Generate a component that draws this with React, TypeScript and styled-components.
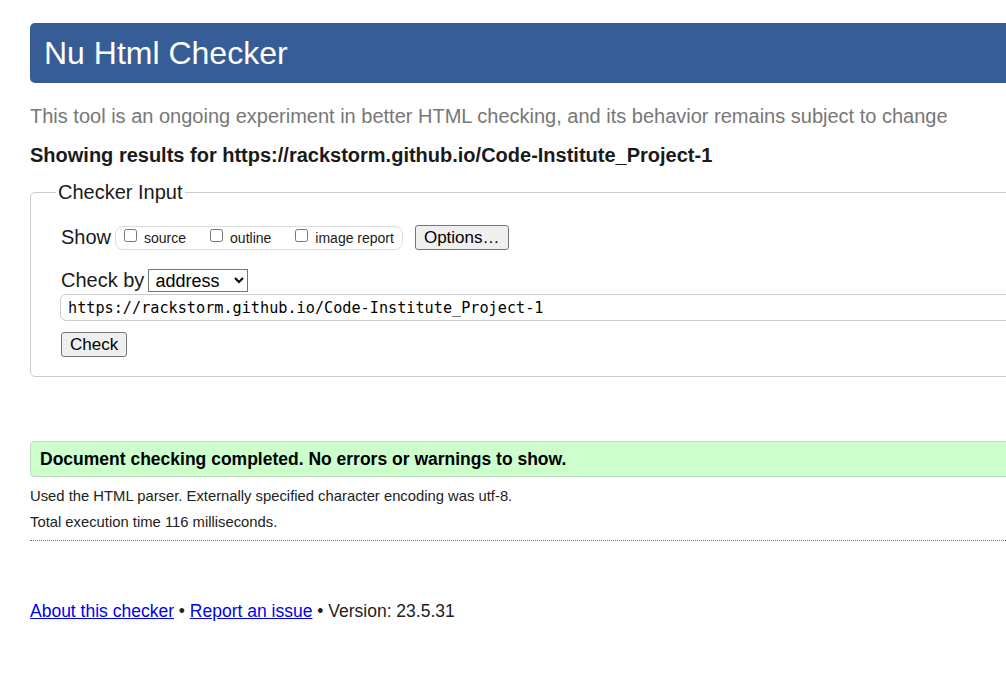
import React from "react";
import styled, { createGlobalStyle } from "styled-components";

const GlobalStyle = createGlobalStyle`
    html, body {
        margin: 0;
        padding: 0;
        background: #fff;
        overflow: hidden;
    }
    body {
        font-family: "Liberation Sans", Arial, sans-serif;
        color: #1a1a1a;
    }
`;

const Page = styled.div`
    width: 1100px;
    padding: 23px 0 0 30px;
`;

const Title = styled.h1`
    margin: 0;
    height: 60px;
    display: flex;
    align-items: center;
    padding: 0 14px;
    background: #365d95;
    color: #fff;
    font-weight: normal;
    font-size: 32px;
    border-radius: 5px;
`;

const Intro = styled.p`
    margin: 20px 0 0;
    font-size: 20px;
    line-height: 26px;
    color: #777;
`;

const Showing = styled.p`
    margin: 14px 0 0;
    font-size: 20px;
    line-height: 24px;
    font-weight: bold;
    color: #1a1a1a;
`;

const Fieldset = styled.fieldset`
    margin: 13px 0 0;
    padding: 8px 0 19px 30px;
    border: 1px solid #ccc;
    border-radius: 5px;
    display: flex;
    flex-direction: column;
    align-items: flex-start;
`;

const Legend = styled.legend`
    margin-left: -5px;
    padding: 0 2px;
    font-size: 20px;
    line-height: 24px;
`;

const Row = styled.div<{ $gap?: number }>`
    display: flex;
    align-items: center;
    margin-top: ${(p) => p.$gap ?? 0}px;
    font-size: 20px;
`;

const Label = styled.span`
    margin-right: 4px;
`;

const Options = styled.span`
    display: flex;
    align-items: center;
    height: 22px;
    padding: 0 8px 0 8px;
    border: 1px solid #ddd;
    border-radius: 8px;
    margin-right: 12px;
    gap: 24px;
`;

const Opt = styled.label`
    display: flex;
    align-items: center;
    font-size: 14px;
    gap: 7px;
    color: #1a1a1a;

    input {
        margin: 0 0 4px;
        width: 13px;
        height: 13px;
    }
`;

const Button = styled.button`
    font-family: "Liberation Sans", Arial, sans-serif;
    font-size: 17px;
    height: 25px;
    padding: 0 8px;
    background: #efefef;
    border: 1px solid #767676;
    border-radius: 3px;
    color: #000;
`;

const Select = styled.select`
    font-family: "Liberation Sans", Arial, sans-serif;
    font-size: 18px;
    width: 100px;
    height: 23px;
    padding: 0 2px;
    border: 1px solid #767676;
    border-radius: 0;
    background: #fff;
    color: #000;
`;

const UrlInput = styled.input`
    margin: 2px 0 0 -1px;
    width: 1000px;
    height: 27px;
    box-sizing: border-box;
    padding: 0 7px;
    border: 1px solid #ccc;
    border-radius: 6px;
    font-family: "DejaVu Sans Mono", "Liberation Mono", monospace;
    font-size: 15.2px;
    color: #000;
`;

const Success = styled.p`
    margin: 64px 0 0;
    height: 36px;
    box-sizing: border-box;
    display: flex;
    align-items: center;
    padding: 0 9px;
    background: #ccffcc;
    border: 1px solid #c0dcc0;
    border-radius: 4px;
    font-size: 17.5px;
    font-weight: bold;
    color: #000;
`;

const Details = styled.div`
    margin-top: 6px;
    padding-bottom: 5px;
    border-bottom: 1px dotted #777;
    font-size: 14.8px;
    color: #222;

    p {
        margin: 0;
        line-height: 26px;
    }
`;

const Footer = styled.p`
    margin: 58px 0 0;
    font-size: 17.5px;
    line-height: 24px;
    color: #222;

    a {
        color: #0000ee;
        text-decoration: underline;
    }
`;

const App = (): React.ReactElement => (
    <Page>
        <GlobalStyle />
        <Title>Nu Html Checker</Title>
        <Intro>
            This tool is an ongoing experiment in better HTML checking, and
            its behavior remains subject to change
        </Intro>
        <Showing>
            Showing results for
            https://rackstorm.github.io/Code-Institute_Project-1
        </Showing>

        <Fieldset>
            <Legend>Checker Input</Legend>
            <Row $gap={13}>
                <Label>Show</Label>
                <Options>
                    <Opt>
                        <input type="checkbox" />
                        source
                    </Opt>
                    <Opt>
                        <input type="checkbox" />
                        outline
                    </Opt>
                    <Opt>
                        <input type="checkbox" />
                        image report
                    </Opt>
                </Options>
                <Button>Options…</Button>
            </Row>
            <Row $gap={19}>
                <Label>Check by</Label>
                <Select defaultValue="address">
                    <option value="address">address</option>
                    <option value="file">file upload</option>
                    <option value="text">text input</option>
                </Select>
            </Row>
            <UrlInput
                type="url"
                defaultValue="https://rackstorm.github.io/Code-Institute_Project-1"
            />
            <Row $gap={11}>
                <Button>Check</Button>
            </Row>
        </Fieldset>

        <Success>Document checking completed. No errors or warnings to show.</Success>
        <Details>
            <p>Used the HTML parser. Externally specified character encoding was utf-8.</p>
            <p>Total execution time 116 milliseconds.</p>
        </Details>

        <Footer>
            <a href="#about">About this checker</a> •{" "}
            <a href="#report">Report an issue</a> • Version: 23.5.31
        </Footer>
    </Page>
);

export default App;
